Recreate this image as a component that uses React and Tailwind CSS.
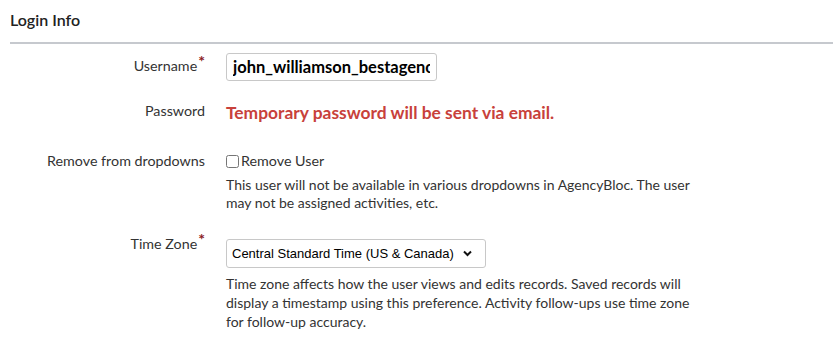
import { useState } from "react";

const Label = ({ children, required }) => (
  <div className="w-[205px] shrink-0 text-right text-[14.3px] leading-[20px] text-[#333]">
    {children}
    {required && <span className="relative -top-[4px] ml-[1px] text-[16px] font-bold leading-[0] text-[#8b1c1c]">*</span>}
  </div>
);

const App = () => {
  const [username, setUsername] = useState("john_williamson_bestagency");
  const [removeUser, setRemoveUser] = useState(false);
  const [timeZone, setTimeZone] = useState("central");

  return (
    <main className="h-[340px] w-[836px] overflow-hidden bg-white font-['Lato',sans-serif] text-[#333]">
      <h2 className="pl-[10px] pt-[10px] text-[16px] font-semibold leading-[20px] text-[#222]">Login Info</h2>
      <div className="ml-[10px] mr-[3px] mt-[12px] h-[2px] bg-[#c6c9ce]" />

      {/* Username */}
      <div className="mt-[9px] flex items-start">
        <div className="pt-[3px]">
          <Label required>Username</Label>
        </div>
        <input
          value={username}
          onChange={(e) => setUsername(e.target.value)}
          className="ml-[21px] h-[28px] w-[211px] rounded-[3px] border border-[#c8c8c8] px-[6px] text-[16.5px] font-bold text-black outline-none"
        />
      </div>

      {/* Password */}
      <div className="mt-[20px] flex items-start">
        <Label>Password</Label>
        <p className="ml-[21px] pt-[2px] text-[17.4px] font-bold leading-[20px] text-[#c8413b]">
          Temporary password will be sent via email.
        </p>
      </div>

      {/* Remove from dropdowns */}
      <div className="mt-[28px] flex items-start">
        <Label>Remove from dropdowns</Label>
        <div className="ml-[21px] w-[480px]">
          <label className="flex h-[20px] items-center text-[14.3px] leading-[20px]">
            <input
              type="checkbox"
              checked={removeUser}
              onChange={(e) => setRemoveUser(e.target.checked)}
              className="m-0 h-[13px] w-[13px]"
            />
            <span className="ml-[2px]">Remove User</span>
          </label>
          <p className="mt-[5px] text-[14px] leading-[18px]">
            This user will not be available in various dropdowns in AgencyBloc. The user may not be assigned activities, etc.
          </p>
        </div>
      </div>

      {/* Time Zone */}
      <div className="mt-[22px] flex items-start">
        <Label required>Time Zone</Label>
        <div className="ml-[21px] w-[480px]">
          <div className="relative mt-[5px] w-[260px]">
            <select
              value={timeZone}
              onChange={(e) => setTimeZone(e.target.value)}
              className="h-[29px] w-full appearance-none rounded-[3px] border border-[#c8c8c8] bg-white pl-[5px] font-['Liberation_Sans',Arial,sans-serif] text-[13px] text-black outline-none"
            >
              <option value="eastern">Eastern Standard Time (US &amp; Canada)</option>
              <option value="central">Central Standard Time (US &amp; Canada)</option>
              <option value="mountain">Mountain Standard Time (US &amp; Canada)</option>
              <option value="pacific">Pacific Standard Time (US &amp; Canada)</option>
            </select>
            <svg
              className="pointer-events-none absolute right-[14px] top-[11px]"
              width="9"
              height="7"
              viewBox="0 0 9 7"
            >
              <path d="M1 1.5 L4.5 5 L8 1.5" fill="none" stroke="#111" strokeWidth="2" />
            </svg>
          </div>
          <p className="mt-[6px] text-[14px] leading-[19px]">
            Time zone affects how the user views and edits records. Saved records will display a timestamp using this preference. Activity follow-ups use time zone for follow-up accuracy.
          </p>
        </div>
      </div>
    </main>
  );
};

export default App;
